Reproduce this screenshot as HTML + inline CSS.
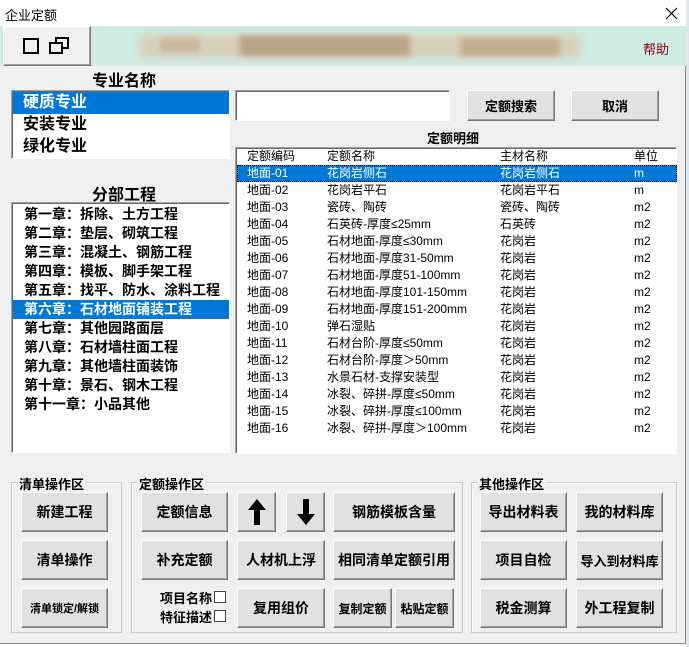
<!DOCTYPE html><html><head><meta charset="utf-8"><style>
*{margin:0;padding:0;box-sizing:border-box}
body{width:689px;height:647px;overflow:hidden;background:#fff;font-family:"Liberation Sans","Noto Sans CJK SC",sans-serif;position:relative}
.a{position:absolute}
#win{left:0;top:0;width:686px;height:644px;background:#f0f0f0;border-right:1px solid #888;border-bottom:1px solid #888}
.btn{position:absolute;background:#e1e1e1;border:1px solid;border-color:#fff #777 #777 #fff;box-shadow:inset -1px -1px 0 #a0a0a0;display:flex;align-items:center;justify-content:center;font-weight:bold;font-size:14px;color:#000;white-space:nowrap}
.sunk{position:absolute;background:#fff;border:1px solid;border-color:#a0a0a0 #fff #fff #a0a0a0;box-shadow:inset 1px 1px 0 #696969}
.grp{position:absolute;border:1px solid #c8c8c8;box-shadow:1px 1px 0 #fff inset}
.grp span{position:absolute;top:-9px;left:5px;background:#f0f0f0;padding:0 2px;font-size:13px;font-weight:bold}
.l2 div{height:19px;line-height:19px;padding-left:11px;font-size:14px;font-weight:bold}
.tb div{position:absolute;font-size:12px;white-space:nowrap;height:17px;line-height:17px}
.tb div.row{left:0;width:440px}
.cb{position:absolute;width:12px;height:12px;background:#fff;border:1px solid #444}
</style></head><body>
<div class="a" style="left:686px;top:0;width:3px;height:647px;background:#dfe8f0"></div>
<div id="win" class="a">
<div class="a" style="left:0;top:0;width:686px;height:26px;background:#fff"></div>
<div class="a" style="left:5px;top:5px;font-size:13px">企业定额</div>
<svg class="a" style="left:665px;top:7px" width="13" height="13" viewBox="0 0 13 13"><path d="M1 1L12 12M12 1L1 12" stroke="#000" stroke-width="1.2"/></svg>
<div class="a" style="left:0;top:26px;width:686px;height:40px;background:#cfece2"></div>
<div class="a" style="left:140px;top:34px;width:440px;height:24px;background:#d8cfba;filter:blur(4px)"></div>
<div class="a" style="left:240px;top:36px;width:170px;height:20px;background:#b9a285;filter:blur(3px)"></div>
<div class="a" style="left:460px;top:38px;width:100px;height:18px;background:#c2ad8f;filter:blur(3px)"></div>
<div class="a" style="left:160px;top:38px;width:40px;height:14px;background:#c8b99e;filter:blur(3px)"></div>
<div class="btn" style="left:3px;top:26px;width:88px;height:40px;background:#f0f0f0;font-weight:normal">
<svg width="60" height="20" viewBox="0 0 60 20"><rect x="7" y="3" width="14" height="14" fill="none" stroke="#000" stroke-width="2"/><rect x="39" y="2" width="12" height="10" fill="none" stroke="#000" stroke-width="2"/><rect x="33" y="7" width="12" height="10" fill="#f0f0f0" stroke="#000" stroke-width="2"/></svg></div>
<div class="a" style="left:643px;top:39px;font-size:13px;color:#8b0000">帮助</div>

<div class="a" style="left:92px;top:67px;font-size:16px;font-weight:bold">专业名称</div>
<div class="sunk" style="left:11px;top:90px;width:219px;height:69px"></div>
<div class="a" style="left:13px;top:92px;width:216px;font-size:16px;font-weight:bold;line-height:22px">
<div style="background:#0078d7;color:#fff;padding-left:10px">硬质专业</div><div style="padding-left:10px">安装专业</div><div style="padding-left:10px">绿化专业</div></div>

<div class="a" style="left:92px;top:181px;font-size:16px;font-weight:bold">分部工程</div>
<div class="sunk" style="left:11px;top:202px;width:219px;height:251px"></div>
<div class="a l2" style="left:13px;top:205px;width:216px">
<div>第一章：拆除、土方工程</div><div>第二章：垫层、砌筑工程</div><div>第三章：混凝土、钢筋工程</div><div>第四章：模板、脚手架工程</div><div>第五章：找平、防水、涂料工程</div><div style="background:#0078d7;color:#fff">第六章：石材地面铺装工程</div><div>第七章：其他园路面层</div><div>第八章：石材墙柱面工程</div><div>第九章：其他墙柱面装饰</div><div>第十章：景石、钢木工程</div><div>第十一章：小品其他</div></div>

<div class="sunk" style="left:235px;top:90px;width:215px;height:31px"></div>
<div class="btn" style="left:467px;top:90px;width:88px;height:31px;font-size:13px">定额搜索</div>
<div class="btn" style="left:571px;top:90px;width:88px;height:31px;font-size:13px">取消</div>
<div class="a" style="left:427px;top:128px;font-size:13px;font-weight:bold">定额明细</div>
<div class="sunk" style="left:235px;top:147px;width:442px;height:307px"></div>
<div class="a tb" style="left:237px;top:148px;width:439px;height:305px">
<div style="left:10px;top:0px">定额编码</div><div style="left:90px;top:0px">定额名称</div><div style="left:263px;top:0px">主材名称</div><div style="left:397px;top:0px">单位</div>
<div class="row" style="top:17px;background:#0078d7;outline:1px dotted #000;outline-offset:-1px"></div>
<div style="left:10px;top:17px;color:#fff">地面-01</div><div style="left:90px;top:17px;color:#fff">花岗岩侧石</div><div style="left:263px;top:17px;color:#fff">花岗岩侧石</div><div style="left:397px;top:17px;color:#fff">m</div>
<div style="left:10px;top:34px">地面-02</div><div style="left:90px;top:34px">花岗岩平石</div><div style="left:263px;top:34px">花岗岩平石</div><div style="left:397px;top:34px">m</div>
<div style="left:10px;top:51px">地面-03</div><div style="left:90px;top:51px">瓷砖、陶砖</div><div style="left:263px;top:51px">瓷砖、陶砖</div><div style="left:397px;top:51px">m2</div>
<div style="left:10px;top:68px">地面-04</div><div style="left:90px;top:68px">石英砖-厚度≤25mm</div><div style="left:263px;top:68px">石英砖</div><div style="left:397px;top:68px">m2</div>
<div style="left:10px;top:85px">地面-05</div><div style="left:90px;top:85px">石材地面-厚度≤30mm</div><div style="left:263px;top:85px">花岗岩</div><div style="left:397px;top:85px">m2</div>
<div style="left:10px;top:102px">地面-06</div><div style="left:90px;top:102px">石材地面-厚度31-50mm</div><div style="left:263px;top:102px">花岗岩</div><div style="left:397px;top:102px">m2</div>
<div style="left:10px;top:119px">地面-07</div><div style="left:90px;top:119px">石材地面-厚度51-100mm</div><div style="left:263px;top:119px">花岗岩</div><div style="left:397px;top:119px">m2</div>
<div style="left:10px;top:136px">地面-08</div><div style="left:90px;top:136px">石材地面-厚度101-150mm</div><div style="left:263px;top:136px">花岗岩</div><div style="left:397px;top:136px">m2</div>
<div style="left:10px;top:153px">地面-09</div><div style="left:90px;top:153px">石材地面-厚度151-200mm</div><div style="left:263px;top:153px">花岗岩</div><div style="left:397px;top:153px">m2</div>
<div style="left:10px;top:170px">地面-10</div><div style="left:90px;top:170px">弹石湿贴</div><div style="left:263px;top:170px">花岗岩</div><div style="left:397px;top:170px">m2</div>
<div style="left:10px;top:187px">地面-11</div><div style="left:90px;top:187px">石材台阶-厚度≤50mm</div><div style="left:263px;top:187px">花岗岩</div><div style="left:397px;top:187px">m2</div>
<div style="left:10px;top:204px">地面-12</div><div style="left:90px;top:204px">石材台阶-厚度＞50mm</div><div style="left:263px;top:204px">花岗岩</div><div style="left:397px;top:204px">m2</div>
<div style="left:10px;top:221px">地面-13</div><div style="left:90px;top:221px">水景石材-支撑安装型</div><div style="left:263px;top:221px">花岗岩</div><div style="left:397px;top:221px">m2</div>
<div style="left:10px;top:238px">地面-14</div><div style="left:90px;top:238px">冰裂、碎拼-厚度≤50mm</div><div style="left:263px;top:238px">花岗岩</div><div style="left:397px;top:238px">m2</div>
<div style="left:10px;top:255px">地面-15</div><div style="left:90px;top:255px">冰裂、碎拼-厚度≤100mm</div><div style="left:263px;top:255px">花岗岩</div><div style="left:397px;top:255px">m2</div>
<div style="left:10px;top:272px">地面-16</div><div style="left:90px;top:272px">冰裂、碎拼-厚度＞100mm</div><div style="left:263px;top:272px">花岗岩</div><div style="left:397px;top:272px">m2</div>
</div>

<div class="grp" style="left:11px;top:482px;width:111px;height:151px"><span>清单操作区</span></div>
<div class="grp" style="left:131px;top:482px;width:332px;height:151px"><span>定额操作区</span></div>
<div class="grp" style="left:471px;top:482px;width:206px;height:151px"><span>其他操作区</span></div>

<div class="btn" style="left:21px;top:492px;width:87px;height:40px">新建工程</div>
<div class="btn" style="left:21px;top:540px;width:87px;height:40px">清单操作</div>
<div class="btn" style="left:21px;top:588px;width:87px;height:40px;font-size:11px">清单锁定/解锁</div>

<div class="btn" style="left:141px;top:492px;width:87px;height:40px">定额信息</div>
<div class="btn" style="left:237px;top:492px;width:39px;height:40px"><svg width="20" height="28" viewBox="0 0 20 28"><path d="M10 1 L19 12 L13 12 L13 27 L7 27 L7 12 L1 12 Z" fill="#000"/></svg></div>
<div class="btn" style="left:286px;top:492px;width:39px;height:40px"><svg width="20" height="28" viewBox="0 0 20 28"><path d="M10 27 L19 16 L13 16 L13 1 L7 1 L7 16 L1 16 Z" fill="#000"/></svg></div>
<div class="btn" style="left:333px;top:492px;width:122px;height:40px">钢筋模板含量</div>
<div class="btn" style="left:141px;top:540px;width:87px;height:40px">补充定额</div>
<div class="btn" style="left:237px;top:540px;width:88px;height:40px">人材机上浮</div>
<div class="btn" style="left:333px;top:540px;width:122px;height:40px">相同清单定额引用</div>
<div class="a" style="left:160px;top:589px;font-size:13px;font-weight:bold;line-height:19px">项目名称<br>特征描述</div>
<div class="cb" style="left:214px;top:591px"></div>
<div class="cb" style="left:214px;top:610px"></div>
<div class="btn" style="left:237px;top:588px;width:88px;height:40px">复用组价</div>
<div class="btn" style="left:333px;top:588px;width:59px;height:40px;font-size:12px">复制定额</div>
<div class="btn" style="left:395px;top:588px;width:59px;height:40px;font-size:12px">粘贴定额</div>

<div class="btn" style="left:480px;top:492px;width:87px;height:40px">导出材料表</div>
<div class="btn" style="left:576px;top:492px;width:87px;height:40px">我的材料库</div>
<div class="btn" style="left:480px;top:540px;width:87px;height:40px">项目自检</div>
<div class="btn" style="left:576px;top:540px;width:87px;height:40px;font-size:13px">导入到材料库</div>
<div class="btn" style="left:480px;top:588px;width:87px;height:40px">税金测算</div>
<div class="btn" style="left:576px;top:588px;width:87px;height:40px">外工程复制</div>
</div>
</body></html>
